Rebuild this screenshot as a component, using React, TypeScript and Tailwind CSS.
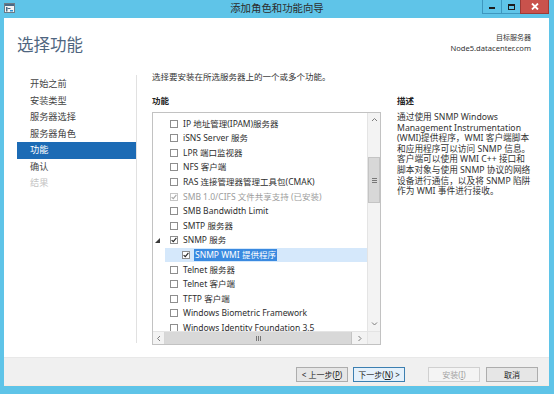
import React from 'react';

type Feature = {
  label: string;
  checked?: boolean;
  disabled?: boolean;
  child?: boolean;
  expanded?: boolean;
  selected?: boolean;
};

const FEATURES: Feature[] = [
  { label: 'IP 地址管理(IPAM)服务器' },
  { label: 'iSNS Server 服务' },
  { label: 'LPR 端口监视器' },
  { label: 'NFS 客户端' },
  { label: 'RAS 连接管理器管理工具包(CMAK)' },
  { label: 'SMB 1.0/CIFS 文件共享支持 (已安装)', checked: true, disabled: true },
  { label: 'SMB Bandwidth Limit' },
  { label: 'SMTP 服务器' },
  { label: 'SNMP 服务', checked: true, expanded: true },
  { label: 'SNMP WMI 提供程序', checked: true, child: true, selected: true },
  { label: 'Telnet 服务器' },
  { label: 'Telnet 客户端' },
  { label: 'TFTP 客户端' },
  { label: 'Windows Biometric Framework' },
  { label: 'Windows Identity Foundation 3.5' },
];

const STEPS = [
  { label: '开始之前' },
  { label: '安装类型' },
  { label: '服务器选择' },
  { label: '服务器角色' },
  { label: '功能', active: true },
  { label: '确认' },
  { label: '结果', muted: true },
];

const DESC = [
  '通过使用 SNMP Windows',
  'Management Instrumentation',
  '(WMI)提供程序，WMI 客户端脚本',
  '和应用程序可以访问 SNMP 信息。',
  '客户端可以使用 WMI C++ 接口和',
  '脚本对象与使用 SNMP 协议的网络',
  '设备进行通信，以及将 SNMP 陷阱',
  '作为 WMI 事件进行接收。',
];

function CheckBox({ checked, disabled }: { checked?: boolean; disabled?: boolean }) {
  return (
    <span
      className={`flex h-[8px] w-[8px] shrink-0 items-center justify-center border bg-white ${
        disabled ? 'border-[#c6c6c6]' : 'border-[#8e8e8e]'
      }`}
    >
      {checked && (
        <svg width="6" height="6" viewBox="0 0 6 6">
          <path d="M0.6 3.1 L2.3 4.7 L5.4 0.9" fill="none" stroke={disabled ? '#a9a9a9' : '#2a2a2a'} strokeWidth="1.2" />
        </svg>
      )}
    </span>
  );
}

function FeatureRow({ item }: { item: Feature }) {
  return (
    <div className={`flex h-[14.6px] items-center ${item.child ? 'ml-[12px] bg-[#d5e8fb] pl-[17px]' : ''}`}>
      {!item.child && (
        <span className="flex w-[17px] shrink-0 items-center pl-[2px]">
          {item.expanded && (
            <svg width="5" height="5" viewBox="0 0 5 5">
              <polygon points="5,0 5,5 0,5" fill="#3a3a3a" />
            </svg>
          )}
        </span>
      )}
      <CheckBox checked={item.checked} disabled={item.disabled} />
      <span
        className={`ml-[4px] whitespace-nowrap px-[1px] leading-[12px] ${
          item.selected ? 'bg-[#3a8ae0] text-white' : item.disabled ? 'text-[#9c9c9c]' : 'text-[#2e2e2e]'
        }`}
      >
        {item.label}
      </span>
    </div>
  );
}

function Chevron({ dir }: { dir: 'up' | 'down' | 'left' | 'right' }) {
  const d = {
    up: 'M1 4 L3.5 1.5 L6 4',
    down: 'M1 1.5 L3.5 4 L6 1.5',
    left: 'M4 1 L1.5 3.5 L4 6',
    right: 'M1.5 1 L4 3.5 L1.5 6',
  }[dir];
  const vertical = dir === 'up' || dir === 'down';
  return (
    <svg width={vertical ? 7 : 6} height={vertical ? 6 : 7} viewBox={vertical ? '0 0 7 6' : '0 0 6 7'}>
      <path d={d} fill="none" stroke="#7c7c7c" strokeWidth="1" />
    </svg>
  );
}

function WinButton({ children, primary, disabled }: { children: React.ReactNode; primary?: boolean; disabled?: boolean }) {
  return (
    <button
      className={`flex h-[15px] w-[52px] items-center justify-center border text-[8px] leading-none ${
        primary
          ? 'border-[#3c7fb1] bg-[#e5f1fb] text-[#222]'
          : disabled
          ? 'border-[#d0d0d0] bg-[#f4f4f4] text-[#a3a3a3]'
          : 'border-[#adadad] bg-[#e6e6e6] text-[#222]'
      }`}
    >
      {children}
    </button>
  );
}

export default function App() {
  return (
    <div className="flex h-[394px] w-[554px] flex-col bg-[#5fc4e8] font-['Noto_Sans','Noto_Sans_CJK_SC',sans-serif]">
      {/* title bar */}
      <div className="grid h-[18px] shrink-0 grid-cols-[1fr_auto_1fr] items-start">
        <div className="pl-[4px] pt-[3px]">
          <svg width="11" height="10" viewBox="0 0 11 10">
            <rect x="0.5" y="0.5" width="10" height="9" fill="#f4f4f4" stroke="#6d7b86" />
            <rect x="1" y="1" width="9" height="2" fill="#4b6a86" />
            <rect x="2" y="4" width="1.5" height="4.5" fill="#4b6a86" />
            <rect x="3.5" y="5" width="3" height="1" fill="#4b6a86" />
            <rect x="6" y="7" width="3" height="1.5" fill="#2f8fd0" />
          </svg>
        </div>
        <div className="pt-[1px] text-[10.4px] leading-[15px] text-[#2c2c2c]">添加角色和功能向导</div>
        <div className="flex justify-end pr-[5px]">
          <div className="flex h-[14px] w-[19px] items-center justify-center border-b border-l border-[#3e97bf]">
            <span className="mt-[3px] h-[2px] w-[6px] bg-[#1c1c1c]" />
          </div>
          <div className="flex h-[14px] w-[19px] items-center justify-center border-b border-l border-[#3e97bf]">
            <span className="h-[6px] w-[7px] border border-t-2 border-[#1c1c1c]" />
          </div>
          <div className="flex h-[14px] w-[29px] items-center justify-center border-b border-l border-r border-[#9c3a36] bg-[#c9524c]">
            <svg width="8" height="7" viewBox="0 0 8 7">
              <path d="M1 0.5 L7 6.5 M7 0.5 L1 6.5" stroke="#ffffff" strokeWidth="1.8" />
            </svg>
          </div>
        </div>
      </div>

      {/* window body */}
      <div className="ml-[4px] mr-[5px] flex flex-1 flex-col bg-white">
        {/* header */}
        <div className="flex h-[52px] shrink-0 items-start justify-between">
          <h1 className="pl-[13px] pt-[17px] text-[16.5px] font-normal leading-[20px] text-[#4f6680]">选择功能</h1>
          <div className="flex flex-col items-end pr-[18px] pt-[15px] text-[#333]">
            <span className="text-[7px] leading-[10px]">目标服务器</span>
            <span className="text-[7.6px] leading-[11px]">Node5.datacenter.com</span>
          </div>
        </div>

        {/* main */}
        <div className="flex h-[287px] shrink-0">
          <nav className="mt-[5px] flex h-[268px] w-[133px] shrink-0 flex-col border-r border-[#e1e1e1] pt-[1px]">
            {STEPS.map((s) => (
              <div
                key={s.label}
                className={`ml-[13px] flex h-[16.5px] items-center pl-[13px] text-[9.2px] ${
                  s.active ? 'bg-[#1c6bb5] text-white' : s.muted ? 'text-[#c4c4c4]' : 'text-[#444]'
                }`}
              >
                {s.label}
              </div>
            ))}
          </nav>

          <section className="flex flex-1 flex-col pl-[15px] text-[8.5px]">
            <p className="leading-[13px] text-[#333]">选择要安装在所选服务器上的一个或多个功能。</p>
            <div className="mt-[11px] flex">
              <div className="flex w-[229px] shrink-0 flex-col">
                <div className="font-semibold leading-[13px] text-[#222]">功能</div>
                <div className="mt-[5px] flex h-[233px] flex-col border border-[#c2c2c2]">
                  <div className="flex min-h-0 flex-1">
                    <div className="flex-1 overflow-hidden pt-[3.4px]">
                      {FEATURES.map((f) => (
                        <FeatureRow key={f.label} item={f} />
                      ))}
                    </div>
                    <div className="flex w-[13px] shrink-0 flex-col border-l border-[#e4e4e4] bg-[#f3f3f3]">
                      <div className="flex h-[14px] items-center justify-center">
                        <Chevron dir="up" />
                      </div>
                      <div className="mt-[30px] flex h-[46px] flex-col items-center justify-center gap-[1px] border border-[#c4c4c4] bg-[#d8d8d8]">
                        <span className="h-px w-[5px] bg-[#777]" />
                        <span className="h-px w-[5px] bg-[#777]" />
                        <span className="h-px w-[5px] bg-[#777]" />
                      </div>
                      <div className="flex-1" />
                      <div className="flex h-[14px] items-center justify-center">
                        <Chevron dir="down" />
                      </div>
                    </div>
                  </div>
                  <div className="flex h-[13px] shrink-0 border-t border-[#e4e4e4] bg-[#f3f3f3]">
                    <div className="flex w-[12px] items-center justify-center border-r border-[#d6d6d6]">
                      <Chevron dir="left" />
                    </div>
                    <div className="flex flex-1 items-center justify-center gap-[1px] border-r border-[#c4c4c4] bg-[#d8d8d8]">
                      <span className="h-[5px] w-px bg-[#777]" />
                      <span className="h-[5px] w-px bg-[#777]" />
                      <span className="h-[5px] w-px bg-[#777]" />
                    </div>
                    <div className="flex w-[15px] items-center justify-center">
                      <Chevron dir="right" />
                    </div>
                    <div className="w-[13px] border-l border-[#e4e4e4] bg-[#f0f0f0]" />
                  </div>
                </div>
              </div>

              <div className="ml-[16px] flex flex-col">
                <div className="font-semibold leading-[13px] text-[#222]">描述</div>
                <div className="mt-[5px] text-[8.7px] leading-[10.6px] text-[#333]">
                  {DESC.map((line) => (
                    <div key={line} className="whitespace-nowrap">
                      {line}
                    </div>
                  ))}
                </div>
              </div>
            </div>
          </section>
        </div>

        {/* footer */}
        <div className="flex flex-1 items-start justify-end border-b border-t border-b-[#f8ebe1] border-t-[#e8e8e8] bg-[#f0f0f0] pr-[11px] pt-[9px]">
          <WinButton>
            &lt; 上一步(<span className="underline">P</span>)
          </WinButton>
          <div className="ml-[5px]">
            <WinButton primary>
              下一步(<span className="underline">N</span>) &gt;
            </WinButton>
          </div>
          <div className="ml-[23px]">
            <WinButton disabled>
              安装(<span className="underline">I</span>)
            </WinButton>
          </div>
          <div className="ml-[6px]">
            <WinButton>取消</WinButton>
          </div>
        </div>
      </div>
      <div className="h-[8px] shrink-0" />
    </div>
  );
}
